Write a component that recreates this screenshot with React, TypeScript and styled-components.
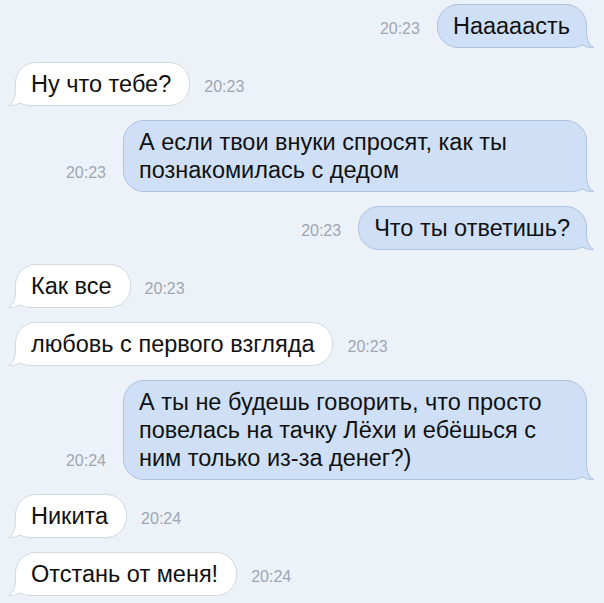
import React from "react";
import styled, { createGlobalStyle } from "styled-components";

const Global = createGlobalStyle`
  html, body { margin: 0; padding: 0; background: #edf1f8; }
  body { font-family: "Liberation Sans", Arial, sans-serif; }
`;

const Chat = styled.div`
  box-sizing: border-box;
  width: 604px;
  height: 603px;
  overflow: hidden;
  padding: 4px 17px 0 15px;
  display: flex;
  flex-direction: column;
  gap: 14px;
  background: #edf1f8;
`;

const Row = styled.div<{ $out?: boolean }>`
  display: flex;
  align-items: flex-end;
  flex-direction: ${(p) => (p.$out ? "row-reverse" : "row")};
  gap: ${(p) => (p.$out ? "17px" : "14px")};
`;

const Bubble = styled.div<{ $out?: boolean; $wide?: boolean }>`
  position: relative;
  box-sizing: border-box;
  width: ${(p) => (p.$wide ? "464px" : "auto")};
  padding: 7px ${(p) => (p.$out ? "16px" : "18px")} 7px 15px;
  border-radius: 21px;
  border: 1px solid ${(p) => (p.$out ? "#aec3de" : "#d3d9e1")};
  background: ${(p) => (p.$out ? "#cfe0f6" : "#ffffff")};
  color: #111;
  font-size: 23.5px;
  line-height: 28px;
  white-space: nowrap;
`;

const Text = styled.span`
  position: relative;
  z-index: 1;
`;

const TailSvg = styled.svg<{ $out?: boolean }>`
  position: absolute;
  z-index: 0;
  bottom: -1px;
  width: 28px;
  height: 24px;
  ${(p) => (p.$out ? "right: -8px;" : "left: -8px; transform: scaleX(-1);")}
`;

const Time = styled.span`
  font-size: 16px;
  line-height: 20px;
  color: #9ea7b2;
  margin-bottom: 9px;
  white-space: nowrap;
`;

const tailPath = "M20.5 0 V9 Q21 20 27.5 23.5 Q21 24 16 21 Q12 23.5 6 23.5 H0";

function Tail({ out }: { out?: boolean }) {
  const fill = out ? "#cfe0f6" : "#ffffff";
  const stroke = out ? "#aec3de" : "#d3d9e1";
  return (
    <TailSvg $out={out} viewBox="0 0 28 24">
      <path d={tailPath + " V0 Z"} fill={fill} stroke="none" />
      <path d={tailPath} fill="none" stroke={stroke} strokeWidth="1" />
    </TailSvg>
  );
}

type Msg = { out?: boolean; lines: string[]; time: string; wide?: boolean };

const messages: Msg[] = [
  { out: true, lines: ["Нааааасть"], time: "20:23" },
  { lines: ["Ну что тебе?"], time: "20:23" },
  {
    out: true,
    wide: true,
    lines: ["А если твои внуки спросят, как ты", "познакомилась с дедом"],
    time: "20:23",
  },
  { out: true, lines: ["Что ты ответишь?"], time: "20:23" },
  { lines: ["Как все"], time: "20:23" },
  { lines: ["любовь с первого взгляда"], time: "20:23" },
  {
    out: true,
    wide: true,
    lines: [
      "А ты не будешь говорить, что просто",
      "повелась на тачку Лёхи и ебёшься с",
      "ним только из-за денег?)",
    ],
    time: "20:24",
  },
  { lines: ["Никита"], time: "20:24" },
  { lines: ["Отстань от меня!"], time: "20:24" },
];

export default function App() {
  return (
    <>
      <Global />
      <Chat>
        {messages.map((m, i) => (
          <Row key={i} $out={m.out}>
            <Bubble $out={m.out} $wide={m.wide}>
              <Tail out={m.out} />
              <Text>
                {m.lines.map((l, j) => (
                  <React.Fragment key={j}>
                    {j > 0 && <br />}
                    {l}
                  </React.Fragment>
                ))}
              </Text>
            </Bubble>
            <Time>{m.time}</Time>
          </Row>
        ))}
      </Chat>
    </>
  );
}
